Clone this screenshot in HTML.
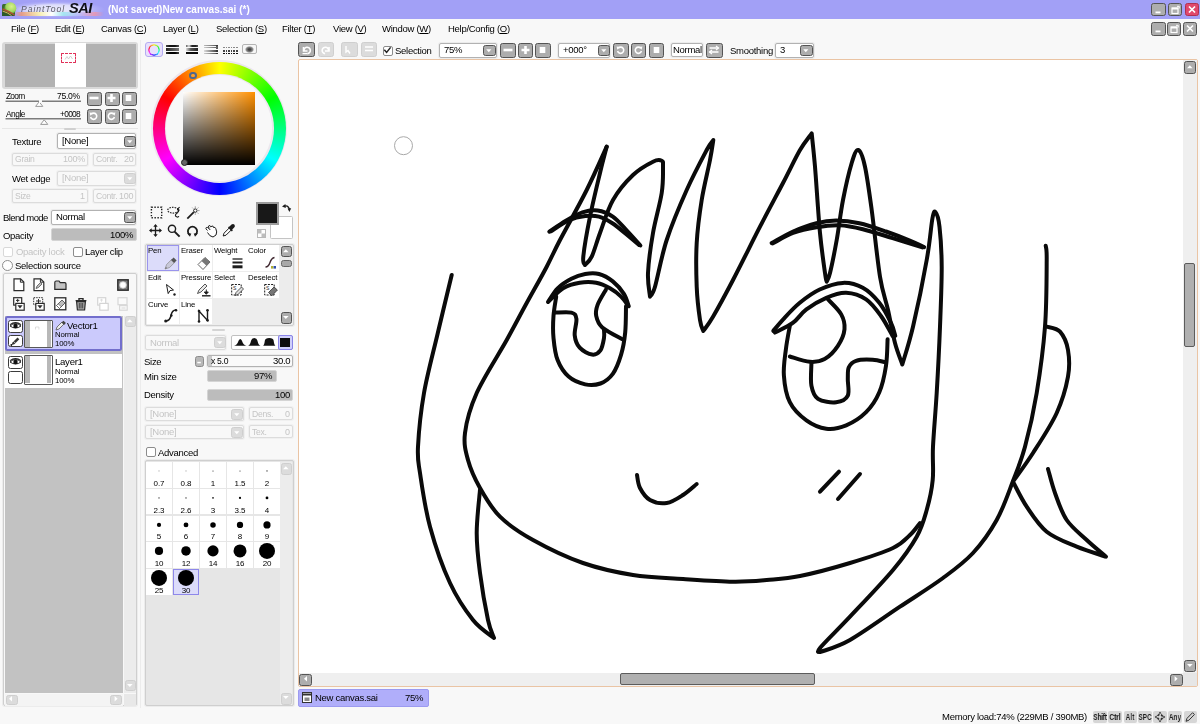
<!DOCTYPE html><html><head><meta charset="utf-8"><title>PaintTool SAI</title><style>
*{box-sizing:border-box;margin:0;padding:0}
html,body{width:1200px;height:724px;overflow:hidden;background:#f8f8f8;font-family:"Liberation Sans",sans-serif;font-size:11px;color:#000}
.a{position:absolute}
.t{position:absolute;white-space:nowrap;line-height:12px;font-size:9.5px;letter-spacing:-.28px;will-change:transform}
.g{color:#c4c4c4}
.btn{position:absolute;background:#adadad;border:1.8px solid #545454;border-radius:2.5px}
.btn.d{background:#dcdcdc;border-color:#cfcfcf}
.fld{position:absolute;background:#fff;border:1px solid #b2b2b2;border-radius:2px;box-shadow:0 0 0 1px #ececec}
.fld.d{background:#f8f8f8;border-color:#dcdcdc;box-shadow:0 0 0 1px #f0f0f0}
.bar{position:absolute;background:#bcbcbc;border:1px solid #d4d4d4;border-radius:2px}
.frm{position:absolute;border:1px solid #cfcfcf;border-radius:2px;box-shadow:0 0 0 1px #ececec}
.cb{position:absolute;width:10px;height:10px;background:#fff;border:1px solid #8c8c8c;border-radius:2px}
.cb.d{border-color:#d8d8d8}
svg{position:absolute;overflow:visible}
u{text-decoration:underline}
</style></head><body>
<div class="a" style="left:0px;top:0px;width:1200px;height:19px;background:#a2a0f6"></div>
<div class="a" style="left:10px;top:1px;width:100px;height:17px;background:radial-gradient(ellipse 50% 50% at 45% 50%,rgba(238,238,252,.95) 0,rgba(232,232,252,.85) 55%,rgba(200,200,250,.35) 80%,rgba(162,160,246,0) 100%)"></div>
<div class="a" style="left:14px;top:11.5px;width:90px;height:4px;background:linear-gradient(90deg,rgba(240,120,90,.0),rgba(240,150,110,.8) 8%,rgba(250,240,170,.9) 28%,rgba(255,255,255,.95) 42%,rgba(160,230,240,.9) 55%,rgba(190,190,250,.7) 72%,rgba(240,150,170,.8) 90%,rgba(240,130,150,0));border-radius:2px;filter:blur(.6px)"></div>
<svg style="left:2px;top:2.3px" width="15" height="14" viewBox="0 0 15 14"><defs><radialGradient id="gb" cx=".6" cy=".35" r=".6"><stop offset="0" stop-color="#d8f08c"/><stop offset=".7" stop-color="#a4d860"/><stop offset="1" stop-color="#5c9838"/></radialGradient></defs><rect x="0" y="2" width="13" height="12" rx="1.500" fill="#3a6a30"/><circle cx="8.300" cy="6.300" r="6" fill="url(#gb)"/><path d="M0 7.500q6 2 13 6.500H0z" fill="#2c5a2a"/><path d="M.5 7q6 2 12 6" stroke="#b05030" stroke-width="1.500" fill="none"/><path d="M.5 9q5 1.500 9 4.500" stroke="#d8b060" stroke-width="1" fill="none"/></svg>
<div class="t " style="left:20.5px;top:2.5px;font-size:8.6px;color:#5c5c68;letter-spacing:.95px"><i>PaintTool</i></div>
<div class="t " style="left:68.5px;top:-1px;font-size:14.6px;line-height:18px;color:#101016;letter-spacing:-.55px"><i><b>SAI</b></i></div>
<div class="t " style="left:108px;top:4px;color:#fff;font-size:10px;letter-spacing:0"><b>(Not saved)New canvas.sai (*)</b></div>
<div class="btn" style="left:1151px;top:2.5px;width:14.5px;height:13.5px;"><svg style="left:0px;top:0px" width="12" height="11" viewBox="0 0 12 11"><rect x="3.5" y="7.5" width="5" height="1.8" fill="#fff"/></svg></div>
<div class="btn" style="left:1168px;top:2.5px;width:14px;height:13.5px;"><svg style="left:0px;top:0px" width="12" height="11" viewBox="0 0 12 11"><rect x="3" y="4" width="6" height="5.5" fill="none" stroke="#fff" stroke-width="1.2"/><path d="M3 4.6h6" stroke="#fff" stroke-width="1.8"/><path d="M8 2.3h2.2v2.2" stroke="#fff" stroke-width="1" fill="none"/></svg></div>
<div class="btn" style="left:1184.5px;top:2.5px;width:14.5px;height:13.5px;background:#e0486c;border-color:#b03050"><svg style="left:0px;top:0px" width="12" height="11" viewBox="0 0 12 11"><path d="M3 2.5l6 6M9 2.5l-6 6" stroke="#fff" stroke-width="1.7"/></svg></div>
<div class="btn" style="left:1151px;top:22px;width:14.5px;height:13.5px;"><svg style="left:0px;top:0px" width="12" height="11" viewBox="0 0 12 11"><rect x="3.5" y="7.5" width="5" height="1.8" fill="#fff"/></svg></div>
<div class="btn" style="left:1167px;top:22px;width:14px;height:13.5px;"><svg style="left:0px;top:0px" width="12" height="11" viewBox="0 0 12 11"><rect x="3" y="4" width="6" height="5.5" fill="none" stroke="#fff" stroke-width="1.2"/><path d="M3 4.6h6" stroke="#fff" stroke-width="1.8"/><path d="M8 2.3h2.2v2.2" stroke="#fff" stroke-width="1" fill="none"/></svg></div>
<div class="btn" style="left:1182.5px;top:22px;width:14px;height:13.5px;"><svg style="left:0px;top:0px" width="12" height="11" viewBox="0 0 12 11"><path d="M3 2.5l6 6M9 2.5l-6 6" stroke="#fff" stroke-width="1.7"/></svg></div>
<div class="t " style="left:11px;top:23px;">File (<u>F</u>)</div>
<div class="t " style="left:55px;top:23px;">Edit (<u>E</u>)</div>
<div class="t " style="left:101px;top:23px;">Canvas (<u>C</u>)</div>
<div class="t " style="left:162.5px;top:23px;">Layer (<u>L</u>)</div>
<div class="t " style="left:215.5px;top:23px;">Selection (<u>S</u>)</div>
<div class="t " style="left:282px;top:23px;">Filter (<u>T</u>)</div>
<div class="t " style="left:332.5px;top:23px;">View (<u>V</u>)</div>
<div class="t " style="left:382px;top:23px;">Window (<u>W</u>)</div>
<div class="t " style="left:447.5px;top:23px;">Help/Config (<u>O</u>)</div>
<div class="btn " style="left:298px;top:42px;width:17px;height:15px"><svg style="left:0px;top:0px" width="14" height="12" viewBox="0 0 14 12"><path d="M4.5 4v4h4" stroke="#fff" stroke-width="1.6" fill="none"/><path d="M5 8a3.2 3.2 0 1 1 3.4 2.6" stroke="#fff" stroke-width="1.6" fill="none"/><path d="M3.5 10.6h5" stroke="#fff" stroke-width="1.3"/></svg></div>
<div class="btn d" style="left:317.5px;top:42px;width:16.5px;height:15px"><svg style="left:0px;top:0px" width="14" height="12" viewBox="0 0 14 12"><path d="M10 4v4h-4" stroke="#fff" stroke-width="1.6" fill="none"/><path d="M9.5 8a3.2 3.2 0 1 0 -3.4 2.6" stroke="#fff" stroke-width="1.6" fill="none"/></svg></div>
<div class="btn d" style="left:341px;top:42px;width:16.5px;height:15px"><svg style="left:0px;top:0px" width="14" height="12" viewBox="0 0 14 12"><path d="M4 3v6l2-1.5 2 3" stroke="#fff" stroke-width="1.4" fill="none"/></svg></div>
<div class="btn d" style="left:360.5px;top:42px;width:16.5px;height:15px"><svg style="left:0px;top:0px" width="14" height="12" viewBox="0 0 14 12"><path d="M3 4h8M3 7.5h8" stroke="#fff" stroke-width="1.3"/></svg></div>
<div class="cb" style="left:382.5px;top:45.5px"><svg style="left:-1px;top:-1px" width="10" height="10" viewBox="0 0 10 10"><path d="M1.3 3.8l2.3 2.6 4-5" stroke="#222" stroke-width="1.5" fill="none"/></svg></div>
<div class="t " style="left:395px;top:44.5px;">Selection</div>
<div class="fld " style="left:439px;top:42.5px;width:58px;height:15px"></div>
<div class="t " style="left:444px;top:44.0px;">75%</div>
<div class="btn " style="left:483px;top:44.5px;width:12.5px;height:11.5px"><svg style="left:0px;top:0px" width="10" height="9" viewBox="0 0 10 9"><path d="M2.2 3.2h5.2l-2.6 3z" fill="#fff"/></svg></div>
<div class="btn " style="left:500px;top:43px;width:16px;height:14.5px"><svg style="left:0px;top:0px" width="13" height="12" viewBox="0 0 13 12"><path d="M2.5 6h9" stroke="#fff" stroke-width="2.6"/></svg></div>
<div class="btn " style="left:518px;top:43px;width:15px;height:14.5px"><svg style="left:-0.5px;top:0px" width="13" height="12" viewBox="0 0 13 12"><path d="M2.5 6h8M6.5 2v8" stroke="#fff" stroke-width="2.6"/></svg></div>
<div class="btn " style="left:535px;top:43px;width:15.5px;height:14.5px"><svg style="left:0px;top:0px" width="13" height="12" viewBox="0 0 13 12"><rect x="3.7" y="3" width="5.6" height="6" fill="#fff"/></svg></div>
<div class="fld " style="left:557.5px;top:42.5px;width:52.5px;height:15px"></div>
<div class="t " style="left:562.5px;top:44.0px;">+000°</div>
<div class="btn " style="left:597.5px;top:44.5px;width:12.5px;height:11.5px"><svg style="left:0px;top:0px" width="10" height="9" viewBox="0 0 10 9"><path d="M2.2 3.2h5.2l-2.6 3z" fill="#fff"/></svg></div>
<div class="btn " style="left:613px;top:43px;width:16px;height:14.5px"><svg style="left:0px;top:0px" width="13" height="12" viewBox="0 0 13 12"><path d="M4.200 4.300a3.100 3.100 0 1 1 -.6 2.700" stroke="#fff" stroke-width="1.600" fill="none"/><path d="M2.600 2.600l3.300 .5-2.500 2.700z" fill="#fff"/></svg></div>
<div class="btn " style="left:630.5px;top:43px;width:15.5px;height:14.5px"><svg style="left:0px;top:0px" width="13" height="12" viewBox="0 0 13 12"><path d="M8.800 4.300a3.100 3.100 0 1 0 .6 2.700" stroke="#fff" stroke-width="1.600" fill="none"/><path d="M10.400 2.600l-3.300 .5 2.500 2.700z" fill="#fff"/></svg></div>
<div class="btn " style="left:648.5px;top:43px;width:15.5px;height:14.5px"><svg style="left:0px;top:0px" width="13" height="12" viewBox="0 0 13 12"><rect x="3.7" y="3" width="5.6" height="6" fill="#fff"/></svg></div>
<div class="fld " style="left:670.5px;top:42.5px;width:32.5px;height:14.5px"></div>
<div class="t " style="left:673px;top:44px;">Normal</div>
<div class="btn " style="left:706px;top:43px;width:16.5px;height:14.5px"><svg style="left:0px;top:0px" width="14" height="12" viewBox="0 0 14 12"><path d="M2.5 4h9M2.5 8h9" stroke="#fff" stroke-width="1.5"/><path d="M9 2l2.5 2L9 6M5 6L2.5 8 5 10" stroke="#fff" stroke-width="1.2" fill="none"/></svg></div>
<div class="t " style="left:729.5px;top:44.5px;">Smoothing</div>
<div class="fld " style="left:774.5px;top:42.5px;width:39px;height:15px"></div>
<div class="t " style="left:779.5px;top:44.0px;">3</div>
<div class="btn " style="left:800px;top:44.5px;width:12.5px;height:11.5px"><svg style="left:0px;top:0px" width="10" height="9" viewBox="0 0 10 9"><path d="M2.2 3.2h5.2l-2.6 3z" fill="#fff"/></svg></div>
<div class="a" style="left:298px;top:59px;width:900px;height:628px;background:#fff;border:1px solid #eac4a4;border-radius:2px"></div>
<div class="a" style="left:299px;top:672.5px;width:884px;height:13.5px;background:#efefef"></div>
<div class="a" style="left:1183px;top:60px;width:14px;height:626px;background:#efefef"></div>
<div class="a" style="left:1183px;top:672.5px;width:14px;height:13.5px;background:#e6e6e6"></div>
<div class="btn " style="left:1183.5px;top:61px;width:12px;height:12.5px"><svg style="left:0px;top:0px" width="10" height="10" viewBox="0 0 10 10"><path d="M2 6.2h5.6l-2.8-3z" fill="#fff"/></svg></div>
<div class="btn " style="left:1183.5px;top:660px;width:12px;height:12px"><svg style="left:0px;top:0px" width="10" height="10" viewBox="0 0 10 10"><path d="M2 3h5.6l-2.8 3z" fill="#fff"/></svg></div>
<div class="btn " style="left:299px;top:674px;width:13px;height:11.5px"><svg style="left:0.5px;top:-0.7px" width="10" height="10" viewBox="0 0 10 10"><path d="M6 2v5.6l-3-2.8z" fill="#fff"/></svg></div>
<div class="btn " style="left:1169.5px;top:674px;width:13px;height:11.5px"><svg style="left:0.5px;top:-0.7px" width="10" height="10" viewBox="0 0 10 10"><path d="M3.6 2v5.6l3-2.8z" fill="#fff"/></svg></div>
<div class="a" style="left:1183.6px;top:262.8px;width:11.8px;height:84.2px;background:#b0b0b0;border:1.5px solid #5c5c5c;border-radius:2px"></div>
<div class="a" style="left:620px;top:673.2px;width:195px;height:12px;background:#b0b0b0;border:1.5px solid #5c5c5c;border-radius:2px"></div>
<div class="a" style="left:297.5px;top:689px;width:131px;height:17.5px;background:#b0aefa;border:1px solid #9c9af0;border-radius:2px"></div>
<svg style="left:302px;top:692px" width="10" height="11" viewBox="0 0 10 11"><rect x=".5" y=".5" width="9" height="10" fill="#fff" stroke="#333" stroke-width="1"/><path d="M.5 2.5h9" stroke="#333" stroke-width="2"/><path d="M2.5 5.5h5v3.5h-5z" fill="#888"/></svg>
<div class="t " style="left:315px;top:692px;">New canvas.sai</div>
<div class="t " style="right:776.5px;top:692px;">75%</div>
<div class="t " style="left:942px;top:711px;">Memory load:74% (229MB / 390MB)</div>
<div class="a" style="left:1093px;top:710.5px;width:14px;height:12px;background:#d6d6d6;border-radius:2px"></div>
<div class="t " style="left:1085.0px;top:710.7px;width:30px;text-align:center;font-size:9.6px;font-weight:bold;letter-spacing:0;color:#1c1c1c;transform:scaleX(.68);letter-spacing:-.3px">Shift</div>
<div class="a" style="left:1108px;top:710.5px;width:14px;height:12px;background:#d6d6d6;border-radius:2px"></div>
<div class="t " style="left:1100.0px;top:710.7px;width:30px;text-align:center;font-size:9.6px;font-weight:bold;letter-spacing:0;color:#1c1c1c;transform:scaleX(.68);">Ctrl</div>
<div class="a" style="left:1123.5px;top:710.5px;width:13px;height:12px;background:#d6d6d6;border-radius:2px"></div>
<div class="t " style="left:1115.0px;top:710.7px;width:30px;text-align:center;font-size:9.6px;font-weight:bold;letter-spacing:0;color:#1c1c1c;transform:scaleX(.68);">Alt</div>
<div class="a" style="left:1138px;top:710.5px;width:14px;height:12px;background:#d6d6d6;border-radius:2px"></div>
<div class="t " style="left:1130.0px;top:710.7px;width:30px;text-align:center;font-size:9.6px;font-weight:bold;letter-spacing:0;color:#1c1c1c;transform:scaleX(.68);">SPC</div>
<div class="a" style="left:1153px;top:710.5px;width:13.5px;height:12px;background:#d6d6d6;border-radius:2px"></div>
<div class="a" style="left:1168px;top:710.5px;width:14px;height:12px;background:#d6d6d6;border-radius:2px"></div>
<div class="t " style="left:1160.0px;top:710.7px;width:30px;text-align:center;font-size:9.6px;font-weight:bold;letter-spacing:0;color:#1c1c1c;transform:scaleX(.68);">Any</div>
<div class="a" style="left:1183.5px;top:710.5px;width:13.5px;height:12px;background:#d6d6d6;border-radius:2px"></div>
<svg style="left:1153.7px;top:710.5px" width="12" height="12" viewBox="0 0 12 12"><circle cx="6" cy="6" r="2.500" fill="none" stroke="#222" stroke-width="1.500" stroke-dasharray="2.400 1.527" stroke-dashoffset="-.76"/><path d="M6 .7l1.500 1.900h-3zM6 11.300l1.500-1.900h-3zM.7 6l1.900-1.500v3zM11.300 6l-1.900-1.500v3z" fill="#222"/></svg>
<svg style="left:1184px;top:710.5px" width="12" height="12" viewBox="0 0 12 12"><path d="M2 10.3l1-3 5.6-5.6 1.8 1.8-5.5 5.7z" fill="none" stroke="#333" stroke-width="1"/></svg>
<div class="a" style="left:2px;top:41.5px;width:136px;height:47px;background:#d9d9d9;border-radius:3px"></div>
<div class="a" style="left:4.5px;top:43.5px;width:131px;height:43px;background:#b2b2b2"></div>
<div class="a" style="left:54.5px;top:43px;width:31px;height:43.5px;background:#fff"></div>
<div class="a" style="left:61px;top:53px;width:14.5px;height:10px;border:1px dashed #e03058;border-radius:1px"></div>
<svg style="left:63.5px;top:55px" width="10" height="6" viewBox="0 0 10 6"><path d="M1 4.5l2-3 1.5 2.5 2-3 2 3" stroke="#c8c8c8" stroke-width=".8" fill="none"/></svg>
<div class="t " style="left:5.5px;top:90px;font-size:8.4px;letter-spacing:-.75px">Zoom</div>
<div class="t " style="right:1120px;top:90px;font-size:8.6px;letter-spacing:-.3px">75.0%</div>
<svg style="left:0;top:0" width="140" height="130"><path d="M5.500 101.200h75.500M5.500 118.700h75.500" stroke="#7c7c7c" stroke-width="1.400"/></svg>
<div class="t " style="left:5.5px;top:107.5px;font-size:8.4px;letter-spacing:-.5px">Angle</div>
<div class="t " style="right:1120px;top:107.5px;font-size:8.4px;letter-spacing:-.7px">+0008</div>
<svg style="left:35px;top:101px" width="9" height="6" viewBox="0 0 9 6"><path d="M4.2 .8l3.6 4.6H.6z" fill="#fff" stroke="#9a9a9a" stroke-width="1"/></svg>
<svg style="left:39.5px;top:118.5px" width="9" height="6" viewBox="0 0 9 6"><path d="M4.2 .8l3.6 4.6H.6z" fill="#fff" stroke="#9a9a9a" stroke-width="1"/></svg>
<div class="a" style="left:39px;top:100px;width:3px;height:2.5px;background:#f8f8f8"></div>
<div class="btn " style="left:87.0px;top:91.5px;width:15px;height:14px"><svg style="left:-0.6px;top:-0.5px" width="13" height="12" viewBox="0 0 13 12"><path d="M2.5 6h9" stroke="#fff" stroke-width="2.6"/></svg></div>
<div class="btn " style="left:104.5px;top:91.5px;width:15px;height:14px"><svg style="left:-0.6px;top:-0.5px" width="13" height="12" viewBox="0 0 13 12"><path d="M2.5 6h8M6.5 2v8" stroke="#fff" stroke-width="2.6"/></svg></div>
<div class="btn " style="left:122.0px;top:91.5px;width:15px;height:14px"><svg style="left:-0.6px;top:-0.5px" width="13" height="12" viewBox="0 0 13 12"><rect x="3.7" y="3" width="5.6" height="6" fill="#fff"/></svg></div>
<div class="btn " style="left:87.0px;top:109px;width:15px;height:14.5px"><svg style="left:-0.6px;top:-0.3px" width="13" height="12" viewBox="0 0 13 12"><path d="M4.200 4.300a3.100 3.100 0 1 1 -.6 2.700" stroke="#fff" stroke-width="1.600" fill="none"/><path d="M2.600 2.600l3.300 .5-2.500 2.700z" fill="#fff"/></svg></div>
<div class="btn " style="left:104.5px;top:109px;width:15px;height:14.5px"><svg style="left:-0.6px;top:-0.3px" width="13" height="12" viewBox="0 0 13 12"><path d="M8.800 4.300a3.100 3.100 0 1 0 .6 2.700" stroke="#fff" stroke-width="1.600" fill="none"/><path d="M10.400 2.600l-3.300 .5 2.500 2.700z" fill="#fff"/></svg></div>
<div class="btn " style="left:122.0px;top:109px;width:15px;height:14.5px"><svg style="left:-0.6px;top:-0.3px" width="13" height="12" viewBox="0 0 13 12"><rect x="3.7" y="3" width="5.6" height="6" fill="#fff"/></svg></div>
<div class="a" style="left:2px;top:128px;width:136px;height:1px;background:#e6e6e6"></div>
<div class="a" style="left:64px;top:127.5px;width:12px;height:2px;background:#d0d0d0;border-radius:1px"></div>
<div class="t " style="left:12px;top:136px;">Texture</div>
<div class="fld " style="left:57px;top:133px;width:79px;height:15.5px"></div>
<div class="t " style="left:62px;top:134.75px;">[None]</div>
<div class="btn " style="left:123.5px;top:135.5px;width:12px;height:11.5px"><svg style="left:0px;top:0px" width="10" height="9" viewBox="0 0 10 9"><path d="M2.2 3.2h5.2l-2.6 3z" fill="#fff"/></svg></div>
<div class="fld d" style="left:12px;top:152.5px;width:76px;height:13px"></div>
<div class="t g" style="left:15px;top:153.0px;font-size:8.6px">Grain</div>
<div class="t g" style="right:1115px;top:153.0px;font-size:9px">100%</div>
<div class="fld d" style="left:92.5px;top:152.5px;width:43.5px;height:13px"></div>
<div class="t g" style="left:95.5px;top:153.0px;font-size:8.6px">Contr.</div>
<div class="t g" style="right:1067.0px;top:153.0px;font-size:9px">20</div>
<div class="t " style="left:12px;top:173px;">Wet edge</div>
<div class="fld d" style="left:57px;top:170.5px;width:79px;height:15px"></div>
<div class="t g" style="left:62px;top:172.0px;">[None]</div>
<div class="btn d" style="left:123.5px;top:172.5px;width:12px;height:11.5px"><svg style="left:0px;top:0px" width="10" height="9" viewBox="0 0 10 9"><path d="M2.2 3.2h5.2l-2.6 3z" fill="#fff"/></svg></div>
<div class="fld d" style="left:12px;top:189px;width:76px;height:13.5px"></div>
<div class="t g" style="left:15px;top:189.75px;font-size:8.6px">Size</div>
<div class="t g" style="right:1115px;top:189.75px;font-size:9px">1</div>
<div class="fld d" style="left:92.5px;top:189px;width:43.5px;height:13.5px"></div>
<div class="t g" style="left:95.5px;top:189.75px;font-size:8.6px">Contr.</div>
<div class="t g" style="right:1067.0px;top:189.75px;font-size:9px">100</div>
<div class="t " style="left:3px;top:211.5px;letter-spacing:-.6px">Blend mode</div>
<div class="fld " style="left:51px;top:210px;width:85px;height:14.5px"></div>
<div class="t " style="left:56px;top:211.25px;">Normal</div>
<div class="btn " style="left:123.5px;top:212px;width:12px;height:11px"><svg style="left:0px;top:0px" width="10" height="9" viewBox="0 0 10 9"><path d="M2.2 3.2h5.2l-2.6 3z" fill="#fff"/></svg></div>
<div class="t " style="left:3px;top:229.5px;">Opacity</div>
<div class="bar" style="left:51px;top:228px;width:86px;height:13px"></div>
<div class="t " style="right:1066.5px;top:229px;">100%</div>
<div class="cb d" style="left:2.5px;top:246.5px"></div>
<div class="t g" style="left:15.5px;top:246px;">Opacity lock</div>
<div class="cb" style="left:72.5px;top:246.5px"></div>
<div class="t " style="left:85px;top:246px;">Layer clip</div>
<div class="cb" style="left:2px;top:260px;width:11px;height:11px;border-radius:50%"></div>
<div class="t " style="left:15.2px;top:260px;">Selection source</div>
<div class="frm" style="left:2.5px;top:273px;width:134.5px;height:433px"></div>
<svg style="left:12.5px;top:277.5px" width="12" height="14" viewBox="0 0 12 14"><path d="M1 .8h6.6l3.2 3.2v8.6H1z" fill="#fff" stroke="#2a2a2a" stroke-width="1.2"/><path d="M7.4 .8v3.4h3.4" fill="none" stroke="#2a2a2a" stroke-width="1"/></svg>
<svg style="left:33px;top:277.5px" width="12" height="14" viewBox="0 0 12 14"><path d="M1 .8h6.6l3.2 3.2v8.6H1z" fill="#fff" stroke="#2a2a2a" stroke-width="1.2"/><path d="M7.4 .8v3.4h3.4" fill="none" stroke="#2a2a2a" stroke-width="1"/><path d="M3 10.5l1-2.5 3.5-3.5 1.5 1.5-3.6 3.6z" fill="#bbb" stroke="#444" stroke-width=".7"/></svg>
<svg style="left:53.5px;top:280px" width="13" height="11" viewBox="0 0 13 11"><path d="M.8 2.5q0-1.5 1.4-1.5h2.8l1.2 1.6h4.6q1.2 0 1.2 1.3v5.4H.8z" fill="#c4c4c4" stroke="#2a2a2a" stroke-width="1.2"/></svg>
<svg style="left:117px;top:279px" width="12" height="12" viewBox="0 0 12 12"><rect x=".8" y=".8" width="10.4" height="10.4" fill="#7c7c7c" stroke="#2a2a2a" stroke-width="1.4"/><circle cx="6" cy="6" r="3.3" fill="#fff"/><circle cx="6" cy="6" r="3.3" fill="none" stroke="#ccc" stroke-width=".8"/></svg>
<svg style="left:12.5px;top:297px" width="12" height="14" viewBox="0 0 12 14"><rect x=".7" y=".7" width="8" height="7.4" fill="#fff" stroke="#2a2a2a" stroke-width="1.2"/><rect x="2.8" y="6.4" width="8.4" height="6.8" fill="#fff" stroke="#2a2a2a" stroke-width="1.2"/><path d="M4.4 8.3h5.2l-2.6 3.2z" fill="#2a2a2a"/><path d="M3 3.4h3.4M4.7 1.8v3.4" stroke="#2a2a2a" stroke-width="1"/></svg>
<svg style="left:33px;top:297px" width="12" height="14" viewBox="0 0 12 14"><rect x=".7" y=".7" width="9" height="7" fill="#fff" stroke="#2a2a2a" stroke-width="1" stroke-dasharray="1.5 1"/><rect x="2.8" y="6.4" width="8.4" height="6.8" fill="#fff" stroke="#2a2a2a" stroke-width="1.2"/><path d="M4.4 8.3h5.2l-2.6 3.2z" fill="#2a2a2a"/><path d="M3 4h5M5.5 2v4" stroke="#2a2a2a" stroke-width="1"/></svg>
<svg style="left:53.5px;top:297px" width="13" height="14" viewBox="0 0 13 14"><rect x=".8" y=".8" width="11" height="12" fill="#fff" stroke="#2a2a2a" stroke-width="1.3"/><path d="M2.5 8.5l5.5-5.5 3 3-5.5 5.5z" fill="#bdbdbd" stroke="#444" stroke-width=".8"/><path d="M2.5 8.5l1.7-1.7 3 3-1.7 1.7z" fill="#fff" stroke="#444" stroke-width=".6"/></svg>
<svg style="left:75px;top:297px" width="12" height="14" viewBox="0 0 12 14"><path d="M1.6 4.6h8.8l-.8 8.4H2.4z" fill="#a8a8a8" stroke="#2a2a2a" stroke-width="1.2"/><path d="M.6 3.6h10.8M4 3.4V1.6h4v1.8" stroke="#2a2a2a" stroke-width="1.4" fill="none"/><path d="M4.3 6v5.4M6 6v5.4M7.7 6v5.4" stroke="#2a2a2a" stroke-width=".8"/></svg>
<svg style="left:96.5px;top:297px" width="12" height="14" viewBox="0 0 12 14"><rect x=".7" y=".7" width="8" height="7.4" fill="#fff" stroke="#d4d4d4" stroke-width="1.2"/><rect x="2.8" y="6.4" width="8.4" height="6.8" fill="#fff" stroke="#d4d4d4" stroke-width="1.2"/><path d="M3 3h3M4.5 1.8v3" stroke="#d8d8d8" stroke-width=".8"/></svg>
<svg style="left:117px;top:297px" width="12" height="14" viewBox="0 0 12 14"><rect x="1" y=".7" width="9" height="7" fill="#fafafa" stroke="#d8d8d8" stroke-width="1.2"/><rect x="2.6" y="8.6" width="7.6" height="4.6" fill="#fafafa" stroke="#d8d8d8" stroke-width="1.2"/><path d="M4.5 11h4" stroke="#d8d8d8"/></svg>
<div class="a" style="left:4.5px;top:315.5px;width:118px;height:377px;background:#c2c2c2"></div>
<div class="a" style="left:123.5px;top:315.5px;width:12.5px;height:377px;background:#ececec"></div>
<div class="a" style="left:5px;top:316px;width:117px;height:35px;background:#cbcafc;border:2px solid #726ecc;border-radius:2.5px"></div>
<div class="a" style="left:5px;top:353.5px;width:117px;height:34.5px;background:#fff"></div>
<div class="a" style="left:8px;top:320px;width:15px;height:12.5px;background:#fff;border:1.3px solid #3c3c3c;border-radius:2.5px"><svg style="left:-0.3px;top:0px" width="13" height="10" viewBox="0 0 13 10"><path d="M1 5q5.5-5 11 0q-5.5 4-11 0z" fill="#fff" stroke="#222" stroke-width="1"/><circle cx="6.5" cy="5" r="2.2" fill="#111"/><path d="M1 3.6q5.5-4 11 0" stroke="#222" stroke-width="1.1" fill="none"/></svg></div>
<div class="a" style="left:8px;top:334.5px;width:15px;height:12.5px;background:#fff;border:1.3px solid #3c3c3c;border-radius:2.5px"><svg style="left:-0.3px;top:0px" width="13" height="10" viewBox="0 0 13 10"><path d="M2.5 9l1-2.6 5-5 1.8 1.8-5 5z" fill="#333"/><path d="M4.6 5.4l1.6 1.6" stroke="#fff" stroke-width=".7"/><circle cx="2.3" cy="9" r=".9" fill="#111"/></svg></div>
<div class="a" style="left:8px;top:356px;width:15px;height:12.5px;background:#fff;border:1.3px solid #3c3c3c;border-radius:2.5px"><svg style="left:-0.3px;top:0px" width="13" height="10" viewBox="0 0 13 10"><path d="M1 5q5.5-5 11 0q-5.5 4-11 0z" fill="#fff" stroke="#222" stroke-width="1"/><circle cx="6.5" cy="5" r="2.2" fill="#111"/><path d="M1 3.6q5.5-4 11 0" stroke="#222" stroke-width="1.1" fill="none"/></svg></div>
<div class="a" style="left:8px;top:371px;width:15px;height:12.5px;background:#fff;border:1.3px solid #3c3c3c;border-radius:2.5px"></div>
<div class="a" style="left:24px;top:319.5px;width:28.5px;height:28.5px;background:#fff;border:1.4px solid #585858;border-radius:1px"></div>
<div class="a" style="left:25.4px;top:320.9px;width:4.2px;height:25.7px;background:#b8b8b8"></div>
<div class="a" style="left:46.9px;top:320.9px;width:4.2px;height:25.7px;background:#b8b8b8"></div>
<div class="a" style="left:24px;top:355px;width:28.5px;height:29.5px;background:#fff;border:1.4px solid #585858;border-radius:1px"></div>
<div class="a" style="left:25.4px;top:356.4px;width:4.2px;height:26.7px;background:#b8b8b8"></div>
<div class="a" style="left:46.9px;top:356.4px;width:4.2px;height:26.7px;background:#b8b8b8"></div>
<svg style="left:35px;top:326px" width="6" height="4" viewBox="0 0 6 4"><path d="M.5 3.5V1h3.4v2.5" stroke="#d0d0d0" stroke-width=".7" fill="none"/></svg>
<svg style="left:55px;top:320px" width="12" height="11" viewBox="0 0 12 11"><path d="M1 10l1-3 5-5 2 2-5 5z" fill="#eee" stroke="#555" stroke-width=".8"/><path d="M6.5 2.5l2-1.8 2.4 2.4-1.9 1.9z" fill="#444"/></svg>
<div class="t " style="left:67px;top:319.8px;font-size:9.6px">Vector1</div>
<div class="t " style="left:55px;top:330.3px;font-size:7.8px;line-height:10px;letter-spacing:-.15px">Normal</div>
<div class="t " style="left:55px;top:339.2px;font-size:7.8px;line-height:10px;letter-spacing:-.15px">100%</div>
<div class="t " style="left:54.5px;top:356.4px;font-size:9.6px">Layer1</div>
<div class="t " style="left:55px;top:366.9px;font-size:7.8px;line-height:10px;letter-spacing:-.15px">Normal</div>
<div class="t " style="left:55px;top:375.8px;font-size:7.8px;line-height:10px;letter-spacing:-.15px">100%</div>
<div class="btn d" style="left:125px;top:316px;width:10.5px;height:10.5px"><svg style="left:-1px;top:-1px" width="10" height="10" viewBox="0 0 10 10"><path d="M2 6.2h5.6l-2.8-3z" fill="#fff"/></svg></div>
<div class="btn d" style="left:125px;top:680px;width:10.5px;height:11px"><svg style="left:-1px;top:-0.5px" width="10" height="10" viewBox="0 0 10 10"><path d="M2 3h5.6l-2.8 3z" fill="#fff"/></svg></div>
<div class="a" style="left:4.5px;top:693.5px;width:118px;height:12px;background:#f4f4f4"></div>
<div class="btn d" style="left:5.5px;top:694.5px;width:12px;height:10.5px"><svg style="left:-0.3px;top:-1.2px" width="10" height="10" viewBox="0 0 10 10"><path d="M6 2v5.6l-3-2.8z" fill="#fff"/></svg></div>
<div class="btn d" style="left:110px;top:694.5px;width:12px;height:10.5px"><svg style="left:-0.3px;top:-1.2px" width="10" height="10" viewBox="0 0 10 10"><path d="M3.6 2v5.6l3-2.8z" fill="#fff"/></svg></div>
<div class="a" style="left:123.5px;top:693.5px;width:12.5px;height:12px;background:#e8e8e8"></div>
<div class="a" style="left:139.5px;top:40px;width:1px;height:668px;background:#ececec"></div>
<div class="a" style="left:145px;top:41.8px;width:17.5px;height:15.6px;background:#e8e0fc;border:1.3px solid #b4acf2;border-radius:3px"></div>
<div class="a" style="left:147.7px;top:43.6px;width:12.2px;height:12.2px;opacity:.75;border-radius:50%;background:conic-gradient(from 0deg,#ff0,#0f0,#0ff,#00f,#f0f,#f00,#ff0);-webkit-mask:radial-gradient(circle,transparent 4.2px,#000 4.7px);mask:radial-gradient(circle,transparent 4.2px,#000 4.700px)"></div>
<div class="a" style="left:166.3px;top:45.2px;width:12.8px;height:2.2px;background:linear-gradient(90deg,#444,#111 30%,#111 70%,#555)"></div>
<div class="a" style="left:166.3px;top:48.2px;width:12.8px;height:2.4px;background:linear-gradient(90deg,#222,#777)"></div>
<div class="a" style="left:166.3px;top:51.8px;width:12.8px;height:2.3px;background:linear-gradient(90deg,#333,#000 30%,#000 70%,#444)"></div>
<div class="a" style="left:185.8px;top:45.2px;width:12.4px;height:2.2px;background:linear-gradient(90deg,#666 0,#ddd 25%,#222 50%,#222 80%,#555)"></div>
<div class="a" style="left:185.8px;top:48.2px;width:12.4px;height:2.4px;background:linear-gradient(90deg,#ddd,#555 40%,#222)"></div>
<div class="a" style="left:185.8px;top:51.8px;width:12.4px;height:2.3px;background:#0c0c0c"></div>
<div class="a" style="left:204px;top:45.2px;width:13.5px;height:1.3px;background:linear-gradient(90deg,#bbb,#444)"></div>
<div class="a" style="left:204px;top:47.2px;width:13.5px;height:1.3px;background:linear-gradient(90deg,#ccc,#555)"></div>
<div class="a" style="left:204px;top:50px;width:13.5px;height:1.6px;background:linear-gradient(90deg,#ddd,#333)"></div>
<div class="a" style="left:204px;top:52.5px;width:13.5px;height:1.3px;background:linear-gradient(90deg,#ccc,#444)"></div>
<div class="a" style="left:216.3px;top:45px;width:1.5px;height:9px;background:repeating-linear-gradient(180deg,#333 0 1.5px,transparent 1.5px 2.600px);opacity:.8"></div>
<div class="a" style="left:223.2px;top:47px;width:14.5px;height:1.2px;background:repeating-linear-gradient(90deg,#888 0 1.5px,transparent 1.5px 2.6px)"></div>
<div class="a" style="left:223.2px;top:49.8px;width:14.5px;height:1.8px;background:repeating-linear-gradient(90deg,#444 0 1.5px,transparent 1.5px 2.6px)"></div>
<div class="a" style="left:223.2px;top:52.5px;width:14.5px;height:1.8px;background:repeating-linear-gradient(90deg,#111 0 1.5px,transparent 1.5px 2.6px)"></div>
<div class="a" style="left:242.3px;top:44.2px;width:14.7px;height:10.3px;background:#f6f6f6;border:1px solid #b4b4b4;border-radius:2px"></div>
<div class="a" style="left:245px;top:45.7px;width:9px;height:7.4px;background:radial-gradient(ellipse,#444 15%,#888 50%,rgba(200,200,200,0) 72%)"></div>
<div class="a" style="left:151.3px;top:60.30000000000001px;width:136px;height:136px;border-radius:50%;background:#ece6ee"></div>
<div class="a" style="left:152.70000000000002px;top:61.70000000000002px;width:133.2px;height:133.2px;border-radius:50%;background:conic-gradient(from 0deg,#ff0,#0f0,#0ff,#00f,#f0f,#f00,#ff0)"></div>
<div class="a" style="left:164.9px;top:73.9px;width:108.8px;height:108.8px;border-radius:50%;background:#ece8ee"></div>
<div class="a" style="left:166.10000000000002px;top:75.10000000000001px;width:106.4px;height:106.4px;border-radius:50%;background:#f8f8f8"></div>
<div class="a" style="left:182.5px;top:92px;width:72.5px;height:73px;background:linear-gradient(180deg,rgba(0,0,0,0),#000),linear-gradient(90deg,#fff,#ff9000)"></div>
<div class="a" style="left:189.3px;top:71.6px;width:7.6px;height:7.6px;border-radius:50%;border:2px solid #50688a;background:rgba(255,170,60,.6)"></div>
<div class="a" style="left:180.8px;top:159.2px;width:7px;height:7px;border-radius:50%;border:1.6px solid #222;background:#666"></div>
<svg style="left:149.6px;top:206.3px" width="13" height="13" viewBox="0 0 13 13"><rect x="1.4" y="1.2" width="10.300" height="10.600" fill="none" stroke="#1c1c1c" stroke-width="1.400" stroke-dasharray="1.400 1.570"/></svg>
<svg style="left:167.3px;top:206.3px" width="14" height="13" viewBox="0 0 14 13"><ellipse cx="6" cy="4.2" rx="5.3" ry="2.9" fill="none" stroke="#1c1c1c" stroke-width="1.1" stroke-dasharray="1.6 1"/><path d="M10.2 3.2q2 .8 1.2 2.400t-2.600 2.600q-1 1.800 .8 2.600t2.200-.6" fill="none" stroke="#1c1c1c" stroke-width="1.100"/><path d="M10.300 3.400l2.300-2.200M10.300 3.400l2.300 .8" stroke="#1c1c1c" stroke-width="1.100"/></svg>
<svg style="left:185.5px;top:205.8px" width="14" height="14" viewBox="0 0 14 14"><path d="M1.300 12.700l6.500-6.500" stroke="#1c1c1c" stroke-width="1.800"/><circle cx="9.300" cy="4.600" r="1.700" fill="#fff" stroke="#1c1c1c" stroke-width="1"/><path d="M9.300 .3v1.700M9.300 7.300v1.500M12 4.600h1.600M11.300 2.600l1.100-1.100M11.300 6.600l1.100 1.100M7.300 2.600l-1-1" stroke="#777" stroke-width=".7"/></svg>
<svg style="left:149px;top:224.3px" width="13" height="13" viewBox="0 0 13 13"><path d="M6.500 1.500v10M1.500 6.500h10" stroke="#1c1c1c" stroke-width="1.300"/><path d="M6.500 0l2.200 2.700H4.300zM6.500 13l2.200-2.700H4.300zM0 6.500l2.700-2.200v4.400zM13 6.500l-2.700-2.200v4.400z" fill="#1c1c1c"/></svg>
<svg style="left:167px;top:224.3px" width="14" height="13" viewBox="0 0 14 13"><circle cx="5" cy="4.800" r="3.600" fill="none" stroke="#1c1c1c" stroke-width="1.400"/><path d="M7.600 7.600l5 5" stroke="#1c1c1c" stroke-width="2"/></svg>
<svg style="left:185.8px;top:224.3px" width="13" height="13" viewBox="0 0 13 13"><path d="M3.300 10.600a4.600 4.600 0 1 1 6.400 0" fill="none" stroke="#1c1c1c" stroke-width="1.800"/><path d="M1 9.200l4.300 .3-1.300 3.300zM12 9.200l-4.300 .3 1.300 3.300z" fill="#1c1c1c"/></svg>
<svg style="left:204px;top:223.8px" width="14" height="14" viewBox="0 0 14 14"><path d="M3.500 6.500q-2.500-2-1.200-3t3 1.500l1 1M5 4.500l-.5-2.500q1.500-1.500 2.200 .8M6.800 3l1.200-1q1.500-.2 1.500 1.500M9.500 3.500q1.800-.8 2.300 1.200 1.700 3.300 .2 6.300l-3 2q-3.500-.5-5.500-4.500" fill="#fff" stroke="#1c1c1c" stroke-width="1"/></svg>
<svg style="left:221.7px;top:223.3px" width="14" height="14" viewBox="0 0 14 14"><path d="M1.200 13l.8-2.800 5.500-5.500 2 2-5.500 5.500z" fill="#fff" stroke="#1c1c1c" stroke-width="1"/><path d="M7.500 3.500l2-2q1.800-1.200 3 .3 1 1.500-.3 2.800l-2 2 .6 .8-1 1-3.800-3.800 1-1z" fill="#1c1c1c"/></svg>
<div class="a" style="left:269.5px;top:215.5px;width:23.5px;height:23.5px;background:#fff;border:1.3px solid #c4c4c4;border-radius:1.5px"></div>
<div class="a" style="left:256px;top:202px;width:23px;height:23px;background:#181818;border:2px solid #9c9c9c"></div>
<svg style="left:281.5px;top:203.5px" width="10" height="9" viewBox="0 0 10 9"><path d="M2 2.400q3.600-1.800 5.500 2.800" fill="none" stroke="#1c1c1c" stroke-width="1.400"/><path d="M0 2.600l3.400-2.600 .4 4zM5.600 4.600l3.600-.4-1.800 3.800z" fill="#1c1c1c"/></svg>
<svg style="left:256.5px;top:229px" width="9" height="9" viewBox="0 0 9 9"><rect x=".5" y=".5" width="8" height="8" fill="#fff" stroke="#b8b8b8"/><rect x="1" y="1" width="3.500" height="3.500" fill="#bdbdbd"/><rect x="4.500" y="4.500" width="3.500" height="3.500" fill="#bdbdbd"/></svg>
<div class="frm" style="left:145px;top:243.5px;width:148.5px;height:82px;background:#ededed"></div>
<div class="a" style="left:146.7px;top:245.3px;width:32.5px;height:25.5px;background:#dcdcfa;border:1.3px solid #9a94ec"></div>
<div class="t " style="left:147.89999999999998px;top:245.4px;font-size:7.8px;line-height:11px;letter-spacing:-.12px">Pen</div>
<svg style="left:164.2px;top:255.8px" width="14" height="14" viewBox="0 0 14 14"><path d="M1 13l1.600-4.500 5-5 3 3-5 5z" fill="#c8c8d8" stroke="#888" stroke-width=".7"/><path d="M7 4l2.600-2.600 3 3-2.600 2.600z" fill="#555"/><path d="M1 13l2-1-1-1z" fill="#666"/></svg>
<div class="a" style="left:179.89999999999998px;top:245.3px;width:32.5px;height:25.5px;background:#fff"></div>
<div class="t " style="left:181.09999999999997px;top:245.4px;font-size:7.8px;line-height:11px;letter-spacing:-.12px">Eraser</div>
<svg style="left:197.39999999999998px;top:255.8px" width="14" height="14" viewBox="0 0 14 14"><path d="M1 8.500l7-7 5 4.500-7 7.500z" fill="#fff" stroke="#555" stroke-width=".9"/><path d="M4.500 5l3.500-3.500 5 4.500-3.500 3.800z" fill="#777"/></svg>
<div class="a" style="left:213.1px;top:245.3px;width:32.5px;height:25.5px;background:#fff"></div>
<div class="t " style="left:214.29999999999998px;top:245.4px;font-size:7.8px;line-height:11px;letter-spacing:-.12px">Weight</div>
<svg style="left:230.6px;top:255.8px" width="14" height="14" viewBox="0 0 14 14"><path d="M1.500 3h10" stroke="#1c1c1c" stroke-width="1.300"/><path d="M1.500 6.500h10" stroke="#1c1c1c" stroke-width="2"/><path d="M1.500 10.800h10" stroke="#1c1c1c" stroke-width="3"/></svg>
<div class="a" style="left:246.3px;top:245.3px;width:32.5px;height:25.5px;background:#fff"></div>
<div class="t " style="left:247.5px;top:245.4px;font-size:7.8px;line-height:11px;letter-spacing:-.12px">Color</div>
<svg style="left:263.8px;top:255.8px" width="14" height="14" viewBox="0 0 14 14"><path d="M1.500 11q3 0 4.500-4.500t4.500-5" fill="none" stroke="#402830" stroke-width="1.400"/><rect x="7" y="10" width="2.400" height="2.600" fill="#b0b030"/><rect x="9.600" y="10" width="2.400" height="2.600" fill="#3050b0"/></svg>
<div class="a" style="left:146.7px;top:272.0px;width:32.5px;height:25.5px;background:#fff"></div>
<div class="t " style="left:147.89999999999998px;top:272.1px;font-size:7.8px;line-height:11px;letter-spacing:-.12px">Edit</div>
<svg style="left:164.2px;top:282.5px" width="14" height="14" viewBox="0 0 14 14"><path d="M2.500 1.500l7 5.500-3.500 .6-1.800 3z" fill="#fff" stroke="#1c1c1c" stroke-width="1"/><circle cx="10.500" cy="11.500" r="1.200" fill="#1c1c1c"/></svg>
<div class="a" style="left:179.89999999999998px;top:272.0px;width:32.5px;height:25.5px;background:#fff"></div>
<div class="t " style="left:181.09999999999997px;top:272.1px;font-size:7.8px;line-height:11px;letter-spacing:-.12px">Pressure</div>
<svg style="left:197.39999999999998px;top:282.5px" width="14" height="14" viewBox="0 0 14 14"><path d="M.5 10.500l1.500-3.500 6-6 2 2-6 6z" fill="#e8e8e8" stroke="#444" stroke-width=".9"/><path d="M9.300 6.500v4M7.300 9l2 2.300 2-2.300z" stroke="#1c1c1c" fill="#1c1c1c" stroke-width="1"/><path d="M5 12.800h8.500" stroke="#1c1c1c" stroke-width="1.400"/></svg>
<div class="a" style="left:213.1px;top:272.0px;width:32.5px;height:25.5px;background:#fff"></div>
<div class="t " style="left:214.29999999999998px;top:272.1px;font-size:7.8px;line-height:11px;letter-spacing:-.12px">Select</div>
<svg style="left:230.6px;top:282.5px" width="14" height="14" viewBox="0 0 14 14"><rect x=".7" y="1.500" width="9.500" height="10.500" fill="none" stroke="#1c1c1c" stroke-width="1" stroke-dasharray="2 1.200"/><path d="M4 12.500l1-3 5.500-5.500 2 2-5.500 5.500z" fill="#ddd" stroke="#333" stroke-width=".8"/><text x="2" y="6.500" font-size="5" font-family="Liberation Sans,sans-serif" fill="#1c1c1c">S</text></svg>
<div class="a" style="left:246.3px;top:272.0px;width:32.5px;height:25.5px;background:#fff"></div>
<div class="t " style="left:247.5px;top:272.1px;font-size:7.8px;line-height:11px;letter-spacing:-.12px">Deselect</div>
<svg style="left:263.8px;top:282.5px" width="14" height="14" viewBox="0 0 14 14"><rect x=".7" y="1.500" width="9.500" height="10.500" fill="none" stroke="#1c1c1c" stroke-width="1" stroke-dasharray="2 1.200"/><path d="M4.500 9.500l5.500-5.500 3.400 3-5.500 5.800z" fill="#777" stroke="#333" stroke-width=".8"/><text x="2" y="6.500" font-size="5" font-family="Liberation Sans,sans-serif" fill="#1c1c1c">S</text></svg>
<div class="a" style="left:146.7px;top:298.7px;width:32.5px;height:25.5px;background:#fff"></div>
<div class="t " style="left:147.89999999999998px;top:298.8px;font-size:7.8px;line-height:11px;letter-spacing:-.12px">Curve</div>
<svg style="left:164.2px;top:309.2px" width="14" height="14" viewBox="0 0 14 14"><path d="M1.500 12q4.500 0 5.500-5.500t5-5.500" fill="none" stroke="#1c1c1c" stroke-width="1.500"/><circle cx="1.700" cy="12" r="1.500" fill="#1c1c1c"/><circle cx="7.300" cy="6.500" r="1.300" fill="#1c1c1c"/><circle cx="12" cy="1.300" r="1.300" fill="#1c1c1c"/></svg>
<div class="a" style="left:179.89999999999998px;top:298.7px;width:32.5px;height:25.5px;background:#fff"></div>
<div class="t " style="left:181.09999999999997px;top:298.8px;font-size:7.8px;line-height:11px;letter-spacing:-.12px">Line</div>
<svg style="left:197.39999999999998px;top:309.2px" width="14" height="14" viewBox="0 0 14 14"><path d="M2 12.500v-10.500l8.500 9.500v-10.500" fill="none" stroke="#1c1c1c" stroke-width="1.400"/><circle cx="2" cy="12.500" r="1.300" fill="#1c1c1c"/><circle cx="2" cy="2" r="1.300" fill="#1c1c1c"/><circle cx="10.500" cy="11.300" r="1.300" fill="#1c1c1c"/><circle cx="10.500" cy="1.300" r="1.300" fill="#1c1c1c"/></svg>
<div class="a" style="left:280.3px;top:245.3px;width:12px;height:79px;background:#ececec"></div>
<div class="btn " style="left:280.5px;top:246.3px;width:11.5px;height:11px"><svg style="left:-0.7px;top:-1px" width="10" height="10" viewBox="0 0 10 10"><path d="M2 6.2h5.6l-2.8-3z" fill="#fff"/></svg></div>
<div class="a" style="left:280.5px;top:260px;width:11.5px;height:6.5px;background:#a8a8a8;border:1.4px solid #666;border-radius:2.5px"></div>
<div class="btn " style="left:280.5px;top:312px;width:11.5px;height:11.5px"><svg style="left:-0.7px;top:-0.3px" width="10" height="10" viewBox="0 0 10 10"><path d="M2 3h5.6l-2.8 3z" fill="#fff"/></svg></div>
<div class="a" style="left:212px;top:329px;width:13px;height:2px;background:#d4d4d4;border-radius:1px"></div>
<div class="fld d" style="left:145px;top:335px;width:81px;height:15px"></div>
<div class="t g" style="left:150px;top:336.5px;">Normal</div>
<div class="btn d" style="left:213.5px;top:337px;width:12px;height:11px"><svg style="left:0px;top:0px" width="10" height="9" viewBox="0 0 10 9"><path d="M2.2 3.2h5.2l-2.6 3z" fill="#fff"/></svg></div>
<div class="a" style="left:231px;top:334.5px;width:62px;height:15.5px;background:#fff;border:1px solid #c0c0c0;border-radius:2px"></div>
<div class="a" style="left:277.5px;top:335px;width:15px;height:14.5px;background:#d0d0fa;border:1.3px solid #8a84e8;border-radius:2px"></div>
<svg style="left:233.5px;top:337.3px" width="12.5" height="9.2" viewBox="0 0 12 8"><path d="M0 8q3-.5 4.500-5 1.500-3 3 0 1.500 4.500 4.500 5z" fill="#111"/></svg>
<svg style="left:248px;top:337.3px" width="12.5" height="9.2" viewBox="0 0 12 8"><path d="M0 8q2-.5 3-5 .5-2.500 3-2.500t3 2.500q1 4.500 3 5z" fill="#111"/></svg>
<svg style="left:262.5px;top:337.3px" width="12.5" height="9.2" viewBox="0 0 12 8"><path d="M0 8q1.200-.3 1.800-5 .3-2.500 4.200-2.500t4.200 2.500q.6 4.700 1.800 5z" fill="#111"/></svg>
<div class="a" style="left:280px;top:337.8px;width:10px;height:8.8px;background:#0c0c0c"></div>
<div class="t " style="left:144.3px;top:356px;">Size</div>
<div class="btn" style="left:195px;top:356px;width:9px;height:10.500px;background:#b8b8b8;border-color:#8c8c8c"><svg style="left:0px;top:0px" width="8" height="8" viewBox="0 0 8 8"><rect x="1.300" y="4.800" width="3.500" height="1.500" fill="#fff"/></svg></div>
<div class="fld" style="left:207px;top:354.600px;width:85.500px;height:12.500px;background:#fafafa"></div>
<div class="a" style="left:208px;top:355.6px;width:3.5px;height:10.5px;background:#c8c8c8"></div>
<div class="t " style="left:211px;top:355px;font-size:8.6px">x 5.0</div>
<div class="t " style="right:910px;top:355px;">30.0</div>
<div class="t " style="left:144.3px;top:370.5px;">Min size</div>
<div class="bar" style="left:207px;top:370px;width:69.500px;height:11.800px"></div>
<div class="t " style="right:927.5px;top:370px;">97%</div>
<div class="t " style="left:144.3px;top:389px;">Density</div>
<div class="bar" style="left:207px;top:388.500px;width:85.500px;height:12px"></div>
<div class="t " style="right:910px;top:388.5px;">100</div>
<div class="fld d" style="left:145px;top:407px;width:98.5px;height:14px"></div>
<div class="t g" style="left:150px;top:408.0px;">[None]</div>
<div class="btn d" style="left:231px;top:408.5px;width:11.5px;height:11px"><svg style="left:0px;top:0px" width="10" height="9" viewBox="0 0 10 9"><path d="M2.2 3.2h5.2l-2.6 3z" fill="#fff"/></svg></div>
<div class="fld d" style="left:248.5px;top:407px;width:44px;height:13px"></div>
<div class="t g" style="left:251.5px;top:407.5px;font-size:8.6px">Dens.</div>
<div class="t g" style="right:910.5px;top:407.5px;font-size:9px">0</div>
<div class="fld d" style="left:145px;top:425px;width:98.5px;height:14px"></div>
<div class="t g" style="left:150px;top:426.0px;">[None]</div>
<div class="btn d" style="left:231px;top:426.5px;width:11.5px;height:11px"><svg style="left:0px;top:0px" width="10" height="9" viewBox="0 0 10 9"><path d="M2.2 3.2h5.2l-2.6 3z" fill="#fff"/></svg></div>
<div class="fld d" style="left:248.5px;top:425px;width:44px;height:13px"></div>
<div class="t g" style="left:251.5px;top:425.5px;font-size:8.6px">Tex.</div>
<div class="t g" style="right:910.5px;top:425.5px;font-size:9px">0</div>
<div class="cb" style="left:145.500px;top:447px"></div>
<div class="t " style="left:158px;top:446.5px;">Advanced</div>
<div class="frm" style="left:145px;top:460px;width:148.500px;height:246px;background:#e6e6e6"></div>
<div class="a" style="left:146.3px;top:462.0px;width:26px;height:25.5px;background:#fff"></div>
<svg style="left:146.3px;top:462.0px" width="26" height="18"><circle cx="13" cy="8.9" r="0.45" fill="#000"/></svg>
<div class="t " style="left:146.3px;top:477.8px;width:26px;text-align:center;font-size:8px;line-height:11px;letter-spacing:-.1px">0.7</div>
<div class="a" style="left:173.15px;top:462.0px;width:26px;height:25.5px;background:#fff"></div>
<svg style="left:173.15px;top:462.0px" width="26" height="18"><circle cx="13" cy="8.9" r="0.45" fill="#000"/></svg>
<div class="t " style="left:173.15px;top:477.8px;width:26px;text-align:center;font-size:8px;line-height:11px;letter-spacing:-.1px">0.8</div>
<div class="a" style="left:200.0px;top:462.0px;width:26px;height:25.5px;background:#fff"></div>
<svg style="left:200.0px;top:462.0px" width="26" height="18"><circle cx="13" cy="8.9" r="0.5" fill="#000"/></svg>
<div class="t " style="left:200.0px;top:477.8px;width:26px;text-align:center;font-size:8px;line-height:11px;letter-spacing:-.1px">1</div>
<div class="a" style="left:226.85000000000002px;top:462.0px;width:26px;height:25.5px;background:#fff"></div>
<svg style="left:226.85000000000002px;top:462.0px" width="26" height="18"><circle cx="13" cy="8.9" r="0.5" fill="#000"/></svg>
<div class="t " style="left:226.85000000000002px;top:477.8px;width:26px;text-align:center;font-size:8px;line-height:11px;letter-spacing:-.1px">1.5</div>
<div class="a" style="left:253.70000000000002px;top:462.0px;width:26px;height:25.5px;background:#fff"></div>
<svg style="left:253.70000000000002px;top:462.0px" width="26" height="18"><circle cx="13" cy="8.9" r="0.55" fill="#000"/></svg>
<div class="t " style="left:253.70000000000002px;top:477.8px;width:26px;text-align:center;font-size:8px;line-height:11px;letter-spacing:-.1px">2</div>
<div class="a" style="left:146.3px;top:488.75px;width:26px;height:25.5px;background:#fff"></div>
<svg style="left:146.3px;top:488.75px" width="26" height="18"><circle cx="13" cy="8.9" r="0.55" fill="#000"/></svg>
<div class="t " style="left:146.3px;top:504.55px;width:26px;text-align:center;font-size:8px;line-height:11px;letter-spacing:-.1px">2.3</div>
<div class="a" style="left:173.15px;top:488.75px;width:26px;height:25.5px;background:#fff"></div>
<svg style="left:173.15px;top:488.75px" width="26" height="18"><circle cx="13" cy="8.9" r="0.6" fill="#000"/></svg>
<div class="t " style="left:173.15px;top:504.55px;width:26px;text-align:center;font-size:8px;line-height:11px;letter-spacing:-.1px">2.6</div>
<div class="a" style="left:200.0px;top:488.75px;width:26px;height:25.5px;background:#fff"></div>
<svg style="left:200.0px;top:488.75px" width="26" height="18"><circle cx="13" cy="8.9" r="0.8" fill="#000"/></svg>
<div class="t " style="left:200.0px;top:504.55px;width:26px;text-align:center;font-size:8px;line-height:11px;letter-spacing:-.1px">3</div>
<div class="a" style="left:226.85000000000002px;top:488.75px;width:26px;height:25.5px;background:#fff"></div>
<svg style="left:226.85000000000002px;top:488.75px" width="26" height="18"><circle cx="13" cy="8.9" r="1.1" fill="#000"/></svg>
<div class="t " style="left:226.85000000000002px;top:504.55px;width:26px;text-align:center;font-size:8px;line-height:11px;letter-spacing:-.1px">3.5</div>
<div class="a" style="left:253.70000000000002px;top:488.75px;width:26px;height:25.5px;background:#fff"></div>
<svg style="left:253.70000000000002px;top:488.75px" width="26" height="18"><circle cx="13" cy="8.9" r="1.4" fill="#000"/></svg>
<div class="t " style="left:253.70000000000002px;top:504.55px;width:26px;text-align:center;font-size:8px;line-height:11px;letter-spacing:-.1px">4</div>
<div class="a" style="left:146.3px;top:515.5px;width:26px;height:25.5px;background:#fff"></div>
<svg style="left:146.3px;top:515.5px" width="26" height="18"><circle cx="13" cy="8.9" r="2.1" fill="#000"/></svg>
<div class="t " style="left:146.3px;top:531.3px;width:26px;text-align:center;font-size:8px;line-height:11px;letter-spacing:-.1px">5</div>
<div class="a" style="left:173.15px;top:515.5px;width:26px;height:25.5px;background:#fff"></div>
<svg style="left:173.15px;top:515.5px" width="26" height="18"><circle cx="13" cy="8.9" r="2.4" fill="#000"/></svg>
<div class="t " style="left:173.15px;top:531.3px;width:26px;text-align:center;font-size:8px;line-height:11px;letter-spacing:-.1px">6</div>
<div class="a" style="left:200.0px;top:515.5px;width:26px;height:25.5px;background:#fff"></div>
<svg style="left:200.0px;top:515.5px" width="26" height="18"><circle cx="13" cy="8.9" r="2.75" fill="#000"/></svg>
<div class="t " style="left:200.0px;top:531.3px;width:26px;text-align:center;font-size:8px;line-height:11px;letter-spacing:-.1px">7</div>
<div class="a" style="left:226.85000000000002px;top:515.5px;width:26px;height:25.5px;background:#fff"></div>
<svg style="left:226.85000000000002px;top:515.5px" width="26" height="18"><circle cx="13" cy="8.9" r="3.15" fill="#000"/></svg>
<div class="t " style="left:226.85000000000002px;top:531.3px;width:26px;text-align:center;font-size:8px;line-height:11px;letter-spacing:-.1px">8</div>
<div class="a" style="left:253.70000000000002px;top:515.5px;width:26px;height:25.5px;background:#fff"></div>
<svg style="left:253.70000000000002px;top:515.5px" width="26" height="18"><circle cx="13" cy="8.9" r="3.6" fill="#000"/></svg>
<div class="t " style="left:253.70000000000002px;top:531.3px;width:26px;text-align:center;font-size:8px;line-height:11px;letter-spacing:-.1px">9</div>
<div class="a" style="left:146.3px;top:542.25px;width:26px;height:25.5px;background:#fff"></div>
<svg style="left:146.3px;top:542.25px" width="26" height="18"><circle cx="13" cy="8.9" r="4.1" fill="#000"/></svg>
<div class="t " style="left:146.3px;top:558.05px;width:26px;text-align:center;font-size:8px;line-height:11px;letter-spacing:-.1px">10</div>
<div class="a" style="left:173.15px;top:542.25px;width:26px;height:25.5px;background:#fff"></div>
<svg style="left:173.15px;top:542.25px" width="26" height="18"><circle cx="13" cy="8.9" r="4.75" fill="#000"/></svg>
<div class="t " style="left:173.15px;top:558.05px;width:26px;text-align:center;font-size:8px;line-height:11px;letter-spacing:-.1px">12</div>
<div class="a" style="left:200.0px;top:542.25px;width:26px;height:25.5px;background:#fff"></div>
<svg style="left:200.0px;top:542.25px" width="26" height="18"><circle cx="13" cy="8.9" r="5.6" fill="#000"/></svg>
<div class="t " style="left:200.0px;top:558.05px;width:26px;text-align:center;font-size:8px;line-height:11px;letter-spacing:-.1px">14</div>
<div class="a" style="left:226.85000000000002px;top:542.25px;width:26px;height:25.5px;background:#fff"></div>
<svg style="left:226.85000000000002px;top:542.25px" width="26" height="18"><circle cx="13" cy="8.9" r="6.5" fill="#000"/></svg>
<div class="t " style="left:226.85000000000002px;top:558.05px;width:26px;text-align:center;font-size:8px;line-height:11px;letter-spacing:-.1px">16</div>
<div class="a" style="left:253.70000000000002px;top:542.25px;width:26px;height:25.5px;background:#fff"></div>
<svg style="left:253.70000000000002px;top:542.25px" width="26" height="18"><circle cx="13" cy="8.9" r="8.0" fill="#000"/></svg>
<div class="t " style="left:253.70000000000002px;top:558.05px;width:26px;text-align:center;font-size:8px;line-height:11px;letter-spacing:-.1px">20</div>
<div class="a" style="left:146.3px;top:569.0px;width:26px;height:25.5px;background:#fff"></div>
<svg style="left:146.3px;top:569.0px" width="26" height="18"><circle cx="13" cy="8.9" r="8.0" fill="#000"/></svg>
<div class="t " style="left:146.3px;top:584.8px;width:26px;text-align:center;font-size:8px;line-height:11px;letter-spacing:-.1px">25</div>
<div class="a" style="left:173.15px;top:569.0px;width:26px;height:25.5px;background:#dcdcfa;border:1.3px solid #8e88ea"></div>
<svg style="left:173.15px;top:569.0px" width="26" height="18"><circle cx="13" cy="8.9" r="8.0" fill="#000"/></svg>
<div class="t " style="left:173.15px;top:584.8px;width:26px;text-align:center;font-size:8px;line-height:11px;letter-spacing:-.1px">30</div>
<div class="a" style="left:280.3px;top:461.5px;width:12.2px;height:243.5px;background:#ececec"></div>
<div class="btn d" style="left:280.5px;top:462.5px;width:11.5px;height:12px"><svg style="left:-0.7px;top:-0.5px" width="10" height="10" viewBox="0 0 10 10"><path d="M2 6.2h5.6l-2.8-3z" fill="#fff"/></svg></div>
<div class="btn d" style="left:280.5px;top:692.5px;width:11.5px;height:12px"><svg style="left:-0.7px;top:-0.3px" width="10" height="10" viewBox="0 0 10 10"><path d="M2 3h5.6l-2.8 3z" fill="#fff"/></svg></div>
<svg style="left:0;top:0" width="1200" height="724" viewBox="0 0 1200 724"><g fill="none" stroke="#0a0a0a" stroke-width="4" stroke-linecap="round" stroke-linejoin="round"><path d="M606.7 146.7C603.4 153.9 594.5 174.4 586.7 190.0C578.9 205.6 566.7 227.2 560.0 240.0C553.3 252.8 552.2 256.2 546.7 266.7C541.2 277.2 533.4 290.8 526.7 303.0C520.0 315.2 515.0 325.0 506.7 340.0C498.4 355.0 483.6 377.5 476.7 393.0C469.8 408.5 466.4 421.8 465.0 433.0C463.6 444.2 465.5 450.8 468.0 460.0C470.5 469.2 474.7 478.6 480.0 488.0C485.3 497.4 491.2 508.0 500.0 516.7C508.8 525.4 519.2 532.3 533.0 540.0C546.8 547.7 566.3 557.2 583.0 563.0C599.7 568.8 616.3 572.3 633.0 575.0C649.7 577.7 666.3 577.9 683.0 579.0C699.7 580.1 719.0 581.5 733.0 581.7C747.0 581.9 755.5 581.0 766.7 580.0C777.9 579.0 786.1 578.8 800.0 576.0C813.9 573.2 834.5 567.7 850.0 563.0C865.5 558.3 883.0 552.7 893.0 548.0C903.0 543.3 905.5 539.2 910.0 535.0C914.5 530.8 918.3 525.0 920.0 523.0"/><path d="M606.7 146.7C605.6 151.1 602.8 161.3 600.0 173.0C597.2 184.7 592.8 202.8 590.0 216.7C587.2 230.6 584.1 248.6 583.3 256.7C582.5 264.8 584.7 263.6 585.0 265.0C586.1 263.6 589.2 262.0 591.7 256.7C594.2 251.4 596.5 242.4 600.0 233.0C603.5 223.6 607.5 209.7 613.0 200.0C618.5 190.3 626.3 181.4 633.0 175.0C639.7 168.6 648.2 164.1 653.0 161.7C657.8 159.3 660.0 159.9 661.7 160.7C663.4 161.5 663.0 161.3 663.0 166.7C663.0 172.1 663.4 181.9 661.7 193.0C660.0 204.1 655.3 219.7 653.0 233.0C650.7 246.3 648.5 262.4 648.0 273.0C647.5 283.6 649.7 292.8 650.0 296.7C650.8 295.0 652.2 296.1 655.0 286.7C657.8 277.2 661.4 256.1 666.7 240.0C672.0 223.9 680.0 205.0 686.7 190.0C693.4 175.0 702.3 158.3 706.7 150.0C711.1 141.7 712.2 141.7 713.3 140.0C712.8 143.3 711.9 150.0 710.0 160.0C708.1 170.0 703.9 186.2 701.7 200.0C699.5 213.8 697.5 228.6 696.7 243.0C695.9 257.4 696.2 273.9 696.7 286.7C697.2 299.5 698.9 312.6 700.0 320.0C701.1 327.4 702.8 329.2 703.3 331.0C704.9 328.6 708.0 325.2 713.0 316.7C718.0 308.2 725.2 295.0 733.0 280.0C740.8 265.0 751.7 242.9 760.0 226.7C768.3 210.5 776.3 195.8 783.0 183.0C789.7 170.2 795.2 158.3 800.0 150.0C804.8 141.7 809.8 136.1 811.7 133.3C812.2 138.9 813.6 150.1 815.0 166.7C816.4 183.3 818.3 215.3 820.0 233.0C821.7 250.7 823.9 264.9 825.0 273.0C826.1 281.1 826.4 280.2 826.7 281.7C827.2 280.2 828.3 279.9 830.0 273.0C831.7 266.1 834.5 252.2 836.7 240.0C838.9 227.8 840.5 212.8 843.0 200.0C845.5 187.2 849.2 171.3 851.7 163.0C854.2 154.7 856.1 149.4 858.3 150.0C860.5 150.6 862.8 156.7 865.0 166.7C867.2 176.7 869.2 191.7 871.7 210.0C874.2 228.3 877.3 260.0 880.0 276.7C882.7 293.4 885.5 298.9 888.0 310.0C890.5 321.1 892.6 333.9 895.0 343.0C897.4 352.1 901.1 360.9 902.3 364.5C904.1 358.2 908.9 344.1 913.0 326.7C917.1 309.3 923.5 278.1 926.7 260.0C930.0 241.9 931.0 225.9 932.5 218.0C934.0 210.1 934.5 211.1 935.7 212.5C936.9 213.9 938.5 217.7 939.5 226.7C940.5 235.7 941.6 250.0 941.7 266.7C941.8 283.4 940.8 305.6 940.0 326.7C939.2 347.8 937.9 373.0 936.7 393.0C935.5 413.0 933.7 432.2 933.0 446.7C932.3 461.2 933.8 469.4 932.7 480.0C931.7 490.6 929.4 500.6 926.7 510.0C924.0 519.5 922.3 526.7 916.7 536.7C911.1 546.7 904.1 556.7 893.0 570.0C881.9 583.3 862.2 603.7 850.0 616.7C837.8 629.7 824.9 642.1 820.0 648.0C815.1 653.9 820.4 651.3 820.5 652.0C825.4 650.0 836.8 647.5 850.0 640.0C863.2 632.5 884.5 617.0 900.0 606.7C915.5 596.4 930.8 587.0 943.0 578.0C955.2 569.0 964.0 562.7 973.0 553.0C982.0 543.3 990.0 532.0 996.7 520.0C1003.4 508.0 1008.3 493.2 1013.0 481.0C1017.7 468.8 1021.0 461.4 1025.0 446.7C1029.0 432.0 1033.4 413.0 1036.7 393.0C1040.0 373.0 1043.3 348.9 1045.0 326.7C1046.7 304.5 1046.6 273.5 1046.7 260.0C1046.8 246.5 1045.9 248.1 1045.7 245.7"/><path d="M1046.7 326.7C1048.9 327.5 1056.5 327.8 1060.0 331.7C1063.5 335.6 1066.7 342.5 1068.0 350.0C1069.3 357.5 1069.9 366.2 1068.0 376.7C1066.1 387.2 1062.5 400.3 1056.7 413.0C1050.9 425.7 1040.3 441.6 1033.0 453.0C1025.7 464.4 1016.3 476.9 1013.0 481.7C1015.3 485.9 1021.1 498.4 1026.7 506.7C1032.3 515.0 1038.4 525.0 1046.7 531.7C1055.0 538.4 1066.8 542.5 1076.7 546.7C1086.6 550.9 1101.1 555.0 1106.0 556.7C1102.8 553.9 1093.2 546.1 1086.7 540.0C1080.2 533.9 1072.0 527.8 1066.7 520.0C1061.4 512.2 1058.1 501.5 1055.0 493.0C1051.9 484.5 1049.2 473.0 1048.0 469.0"/><path d="M451.7 275.0C449.4 284.7 442.4 313.3 437.8 333.0C433.2 352.7 427.3 374.1 424.0 393.0C420.7 411.9 418.7 433.4 418.0 446.7C417.3 460.0 418.0 459.7 420.0 473.0C422.0 486.3 425.0 508.4 430.0 526.7C435.0 545.0 442.8 567.5 450.0 583.0C457.2 598.5 465.7 610.8 473.0 620.0C480.3 629.2 490.5 635.0 494.0 638.0C493.0 635.0 490.3 630.8 488.0 620.0C485.7 609.2 481.9 587.5 480.0 573.0C478.1 558.5 476.7 546.8 476.7 533.0C476.7 519.2 479.4 497.2 480.0 490.0"/><path d="M637.0 475.0C637.5 477.2 637.8 483.8 640.0 488.0C642.2 492.2 645.5 497.5 650.0 500.0C654.5 502.5 661.2 503.8 666.7 503.0C672.2 502.2 678.0 498.2 683.0 495.0C688.0 491.8 694.4 485.8 696.7 484.0"/><path d="M839 471.7L820 491.7"/><path d="M860 474L838 499"/><path d="M549.3 231.7C552.1 229.9 560.4 223.9 565.9 220.7C571.4 217.5 577.1 214.1 582.4 212.4C587.7 210.7 592.5 209.8 597.6 210.5C602.7 211.2 608.0 213.3 612.8 216.6C617.6 219.9 622.0 225.6 626.6 230.4C631.2 235.2 638.1 243.0 640.4 245.5"/><path d="M551.0 231.2C553.9 229.4 562.9 222.8 568.6 220.3C574.3 217.8 580.1 216.6 585.2 216.0C590.3 215.4 594.4 215.3 599.0 216.6C603.6 217.8 608.2 220.5 612.8 223.5C617.4 226.5 622.2 230.9 626.6 234.5C631.0 238.1 636.9 243.2 639.0 245.0"/><path d="M771.6 243.1C775.2 241.2 785.6 234.8 793.1 231.5C800.6 228.2 809.2 225.0 816.4 223.2C823.6 221.4 829.0 220.6 836.2 220.6C843.4 220.6 851.1 221.4 859.4 223.2C867.7 225.0 877.7 228.6 886.0 231.5C894.3 234.4 902.9 237.8 909.2 240.4C915.6 243.0 921.6 246.0 924.1 247.1"/><path d="M773.0 243.3C776.3 241.6 785.8 235.7 793.0 233.0C800.2 230.3 808.6 228.5 816.4 227.2C824.2 225.9 831.9 224.9 839.6 225.2C847.3 225.5 854.0 227.0 862.8 229.2C871.6 231.3 882.7 235.1 892.6 238.1C902.5 241.1 917.4 245.8 922.4 247.4"/><path d="M548.0 302.0C549.6 299.7 553.7 292.2 557.6 288.3C561.5 284.4 566.8 281.1 571.4 278.7C576.0 276.3 580.6 274.8 585.2 274.0C589.8 273.2 594.4 272.8 599.0 274.0C603.6 275.2 608.6 278.1 612.8 281.4C616.9 284.7 621.2 289.6 623.9 293.8C626.6 298.0 628.0 304.2 628.8 306.3"/><path d="M549.3 300.7C551.6 298.6 558.0 291.3 563.1 288.3C568.2 285.3 574.2 283.7 579.7 282.8C585.2 281.9 591.2 281.9 596.2 282.8C601.2 283.7 605.9 286.0 610.0 288.3C614.1 290.6 618.1 293.7 621.1 296.6C624.1 299.5 626.9 304.0 628.0 305.5"/><path d="M556.2 296.6C555.8 299.8 554.0 309.0 553.5 315.9C553.0 322.8 552.8 330.6 553.5 338.0C554.2 345.4 555.1 353.7 557.6 360.1C560.1 366.5 564.0 372.6 568.6 376.6C573.2 380.7 579.9 383.2 585.2 384.4C590.5 385.5 595.8 385.2 600.4 383.5C605.0 381.8 609.3 378.7 612.8 373.9C616.2 369.1 619.0 361.5 621.1 354.6C623.2 347.7 624.4 340.6 625.2 332.5C626.0 324.4 625.9 310.7 626.0 306.3"/><path d="M605.9 289.7C604.5 292.2 599.2 300.5 597.6 304.9C596.0 309.3 595.4 312.1 596.2 315.9C597.0 319.7 597.9 323.6 602.3 327.5C606.7 331.4 619.1 337.4 622.5 339.4"/><path d="M554.8 312.6C557.6 312.6 567.8 311.6 571.4 312.6C575.0 313.6 575.8 314.9 576.4 318.7C577.0 322.5 574.2 330.4 574.7 335.2C575.2 340.0 576.8 344.5 579.7 347.7C582.6 350.9 588.7 354.2 592.1 354.6C595.5 355.1 598.4 353.2 600.4 350.4C602.4 347.6 603.4 341.4 604.0 338.0C604.6 334.6 604.0 331.1 604.0 329.7"/><path d="M773.3 330.9C774.9 329.0 778.8 324.0 783.2 319.3C787.6 314.6 793.7 307.8 799.8 302.8C805.9 297.8 812.5 292.8 819.7 289.5C826.9 286.2 835.7 283.2 842.9 282.9C850.1 282.6 856.7 284.5 862.8 287.8C868.9 291.1 874.6 297.0 879.3 302.8C884.0 308.6 888.2 317.2 890.9 322.7C893.6 328.2 894.6 333.7 895.3 335.9"/><path d="M774.9 332.6C777.9 331.0 787.9 326.6 793.1 322.7C798.4 318.8 800.9 313.5 806.4 309.4C811.9 305.2 819.7 300.6 826.3 297.8C832.9 295.0 839.6 292.5 846.2 292.8C852.8 293.1 860.3 295.5 866.1 299.4C871.9 303.3 876.6 309.9 881.0 316.0C885.4 322.1 890.7 332.6 892.6 335.9"/><path d="M789.8 326.0C789.1 329.9 786.9 340.9 785.9 349.2C784.9 357.5 783.2 366.9 783.9 375.7C784.5 384.5 786.0 394.8 789.8 402.2C793.5 409.6 800.3 416.0 806.4 420.4C812.5 424.8 819.7 427.9 826.3 428.7C832.9 429.5 839.6 428.1 846.2 425.4C852.8 422.6 860.6 417.7 866.1 412.2C871.6 406.7 876.0 400.1 879.3 392.3C882.6 384.6 884.6 374.6 886.0 365.7C887.4 356.8 887.3 343.6 887.6 339.2"/><path d="M828.0 299.4C830.2 301.9 838.5 309.4 841.2 314.4C844.0 319.4 845.0 324.1 844.5 329.3C844.0 334.6 841.2 340.9 837.9 345.9C834.6 350.9 829.3 356.5 824.6 359.1C819.9 361.8 815.5 362.2 809.7 361.8C803.9 361.4 793.1 357.4 789.8 356.5"/><path d="M811.4 364.1C811.4 367.7 810.3 379.8 811.4 385.6C812.5 391.4 813.9 396.1 818.0 398.9C822.1 401.7 831.2 402.8 836.2 402.2C841.2 401.6 845.9 399.5 847.8 395.6C849.7 391.7 847.6 383.7 847.8 379.0C848.0 374.3 847.4 370.4 848.8 367.4C850.2 364.4 852.1 362.1 856.1 360.8C860.1 359.5 867.7 359.5 872.7 359.8C877.7 360.1 883.8 362.0 886.0 362.4"/></g><circle cx="403.5" cy="145.7" r="9" fill="none" stroke="#a8a8a8" stroke-width="1"/></svg>
</body></html>
